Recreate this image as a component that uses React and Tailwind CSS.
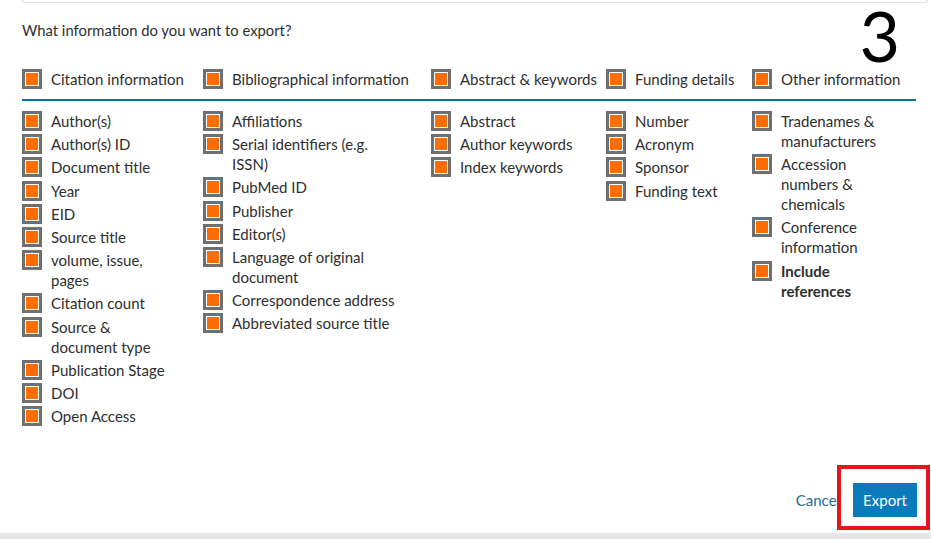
import React from "react";

const columns = [
  {
    title: "Citation information",
    width: "w-[181px]",
    textWidth: "max-w-[122px]",
    items: [
      "Author(s)",
      "Author(s) ID",
      "Document title",
      "Year",
      "EID",
      "Source title",
      "volume, issue, pages",
      "Citation count",
      "Source & document type",
      "Publication Stage",
      "DOI",
      "Open Access",
    ],
  },
  {
    title: "Bibliographical information",
    width: "w-[228px]",
    textWidth: "max-w-[166px]",
    items: [
      "Affiliations",
      "Serial identifiers (e.g. ISSN)",
      "PubMed ID",
      "Publisher",
      "Editor(s)",
      "Language of original document",
      "Correspondence address",
      "Abbreviated source title",
    ],
  },
  {
    title: "Abstract & keywords",
    width: "w-[175px]",
    textWidth: "max-w-[140px]",
    items: ["Abstract", "Author keywords", "Index keywords"],
  },
  {
    title: "Funding details",
    width: "w-[146px]",
    textWidth: "max-w-[115px]",
    items: ["Number", "Acronym", "Sponsor", "Funding text"],
  },
  {
    title: "Other information",
    width: "w-[163px]",
    textWidth: "max-w-[104px]",
    items: [
      "Tradenames & manufacturers",
      "Accession numbers & chemicals",
      "Conference information",
      "Include references",
    ],
  },
];

const Check = () => (
  <span className="shrink-0 w-5 h-5 border-[3px] border-[#6f6f6f] bg-white p-[1px] flex">
    <span className="flex-1 bg-[#ff6c00]" />
  </span>
);

const Item = ({ label, textWidth, bold }) => (
  <div className="flex items-start gap-[9px]">
    <Check />
    <span className={`${textWidth} leading-5 ${bold ? "font-bold" : ""}`}>{label}</span>
  </div>
);

export default function App() {
  return (
    <div
      className="relative h-[539px] w-[931px] bg-white flex flex-col text-[#2e2e2e] overflow-hidden"
      style={{ fontFamily: "Lato, 'Open Sans', sans-serif" }}
    >
      {/* edge of the card above */}
      <div className="h-[3px] ml-[22px] mr-[3px] border-b border-x border-[#e4e4e4] rounded-b" />

      <span className="absolute right-[31px] top-[1px] text-[70px] leading-[68px] text-black">
        3
      </span>

      <div className="px-[22px]">
        <p className="mt-[17px] text-[14.8px] leading-5">What information do you want to export?</p>

        <div className="flex mt-[29px] text-[15px]">
          {columns.map((col) => (
            <div key={col.title} className={`${col.width} shrink-0`}>
              <div className="flex items-center gap-[9px]">
                <Check />
                <span className="leading-5 whitespace-nowrap">{col.title}</span>
              </div>
            </div>
          ))}
        </div>

        <div className="mt-[10px] h-[2px] w-[894px] bg-[#00739e]" />

        <div className="flex mt-[10px] text-[15px]">
          {columns.map((col) => (
            <div key={col.title} className={`${col.width} shrink-0 flex flex-col gap-[3.2px]`}>
              {col.items.map((it) => (
                <Item
                  key={it}
                  label={it}
                  textWidth={col.textWidth}
                  bold={it === "Include references"}
                />
              ))}
            </div>
          ))}
        </div>
      </div>

      <div className="flex-1" />

      <div className="flex items-center justify-end gap-[13px] pr-[14px] mb-[16px]">
        <span className="text-[15px] text-[#1f6e9a]">Cancel</span>
        <div className="relative">
          <div className="absolute -left-[16px] -top-[18px] -right-[13px] -bottom-[13px] border-4 border-[#e8141c] bg-white" />
          <button className="relative z-10 h-[34px] px-[10px] bg-[#0b7bbb] text-white text-[15px]">
            Export
          </button>
        </div>
      </div>

      <div className="h-[6px] bg-[#e6e6e6]" />
    </div>
  );
}
